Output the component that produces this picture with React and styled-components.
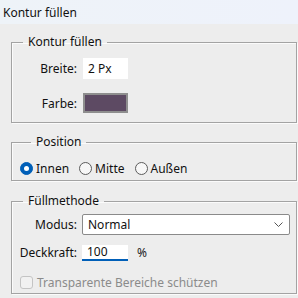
import React from 'react';
import styled, { createGlobalStyle } from 'styled-components';

const GlobalStyle = createGlobalStyle`
    html, body {
        margin: 0;
        padding: 0;
        background: #ededed;
    }
    body {
        font-family: "Noto Sans", "Segoe UI", sans-serif;
        font-size: 12px;
        color: #1b1b1b;
    }
`;

const Window = styled.div`
    width: 298px;
    height: 298px;
    background: #ededed;
    overflow: hidden;
`;

const TitleBar = styled.div`
    height: 24px;
    display: flex;
    align-items: center;
    padding-left: 3px;
    background: linear-gradient(90deg, #eef3f8 0%, #eef2fb 100%);
    color: #111;
    font-size: 12px;
`;

const Body = styled.div`
    display: flex;
    flex-direction: column;
    padding: 10px 1px 0 11px;
`;

const Group = styled.fieldset`
    margin: 0 0 ${p => p.$gap || 0}px 0;
    padding: ${p => p.$pad};
    border: 1px solid #a3a3a3;
    box-shadow: inset 1px 1px 0 #fbfbfb, 1px 1px 0 #fbfbfb;
    min-width: 0;
`;

const Legend = styled.legend`
    margin-left: 11px;
    padding: 0 5px;
    line-height: 16px;
    font-size: 12px;
    color: #111;
`;

const FormGrid = styled.div`
    display: grid;
    grid-template-columns: 65px ${p => p.$field};
    column-gap: ${p => p.$colGap}px;
    row-gap: ${p => p.$rowGap}px;
    align-items: center;
`;

const Label = styled.span`
    text-align: right;
    color: #111;
`;

const TextBox = styled.div`
    width: 40px;
    height: 21px;
    padding-left: 5px;
    display: flex;
    align-items: center;
    background: #fff;
    color: #111;
`;

const Swatch = styled.div`
    width: 41px;
    height: 16px;
    border: 2px solid #8e8e8e;
    background: ${p => p.$color};
`;

const RadioRow = styled.div`
    display: flex;
    align-items: center;
    gap: 10px;
    height: 16px;
`;

const RadioOption = styled.label`
    display: inline-flex;
    align-items: center;
    gap: 3px;
    color: #111;
`;

const RadioDot = styled.span`
    box-sizing: border-box;
    width: 13px;
    height: 13px;
    border-radius: 50%;
    background: ${p => (p.$checked ? '#005fb8' : '#f7f7f7')};
    border: 1px solid ${p => (p.$checked ? '#005fb8' : '#5c5c5c')};
    display: flex;
    align-items: center;
    justify-content: center;

    &::after {
        content: '';
        width: 5px;
        height: 5px;
        border-radius: 50%;
        background: #fff;
        display: ${p => (p.$checked ? 'block' : 'none')};
    }
`;

const Select = styled.div`
    box-sizing: border-box;
    height: 21px;
    display: flex;
    align-items: center;
    justify-content: space-between;
    padding: 0 6px 0 5px;
    background: #fff;
    border: 1px solid #8a8a8a;
    border-radius: 2px;
    color: #111;
`;

const OpacityRow = styled.div`
    display: flex;
    align-items: center;
    gap: 9px;
`;

const OpacityInput = styled.div`
    box-sizing: border-box;
    width: 46px;
    height: 16px;
    padding-left: 5px;
    display: flex;
    align-items: center;
    background: #fff;
    border-bottom: 2px solid #005fb8;
    color: #111;
`;

const CheckRow = styled.label`
    display: flex;
    align-items: center;
    gap: 4px;
    height: 14px;
    margin-top: 14px;
    padding-left: 8px;
    color: #8b8b8b;
`;

const CheckBox = styled.span`
    box-sizing: border-box;
    width: 13px;
    height: 13px;
    border: 1px solid #c4c4c4;
    border-radius: 3px;
    background: #f1f1f1;
`;

function Chevron() {
    return (
        <svg width="9" height="5" viewBox="0 0 9 5">
            <polyline points="0.5,0.5 4.5,4.5 8.5,0.5" fill="none" stroke="#555" strokeWidth="1" />
        </svg>
    );
}

export default function App() {
    return (
        <Window>
            <GlobalStyle />
            <TitleBar>Kontur füllen</TitleBar>
            <Body>
                <Group $pad="8px 0 9px 0" $gap={11}>
                    <Legend>Kontur füllen</Legend>
                    <FormGrid $field="auto" $colGap={6} $rowGap={14}>
                        <Label>Breite:</Label>
                        <div><TextBox>2 Px</TextBox></div>
                        <Label>Farbe:</Label>
                        <div><Swatch $color="#5d4a63" /></div>
                    </FormGrid>
                </Group>

                <Group $pad="10px 0 4px 8px" $gap={12}>
                    <Legend>Position</Legend>
                    <RadioRow>
                        <RadioOption><RadioDot $checked />Innen</RadioOption>
                        <RadioOption><RadioDot />Mitte</RadioOption>
                        <RadioOption><RadioDot />Außen</RadioOption>
                    </RadioRow>
                </Group>

                <Group $pad="5px 6px 4px 0">
                    <Legend>Füllmethode</Legend>
                    <FormGrid $field="1fr" $colGap={5} $rowGap={9}>
                        <Label>Modus:</Label>
                        <Select>
                            <span>Normal</span>
                            <Chevron />
                        </Select>
                        <Label>Deckkraft:</Label>
                        <OpacityRow>
                            <OpacityInput>100</OpacityInput>
                            <span>%</span>
                        </OpacityRow>
                    </FormGrid>
                    <CheckRow>
                        <CheckBox />
                        Transparente Bereiche schützen
                    </CheckRow>
                </Group>
            </Body>
        </Window>
    );
}
